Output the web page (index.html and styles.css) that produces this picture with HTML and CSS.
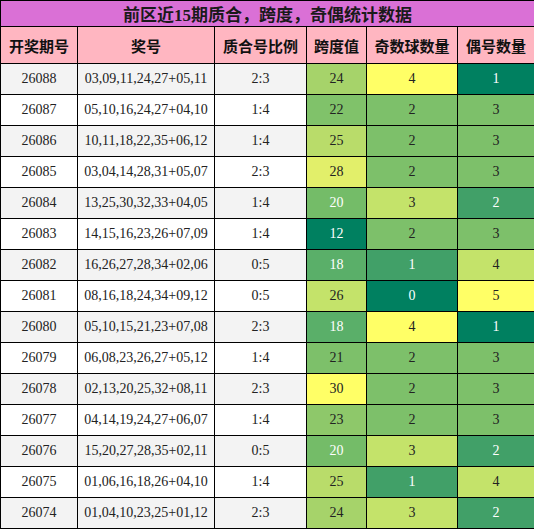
FILE: index.html
```html
<!DOCTYPE html>
<html lang="zh">
<head>
<meta charset="utf-8">
<title>前区近15期质合，跨度，奇偶统计数据</title>
<link rel="stylesheet" href="styles.css">
</head>
<body>
<table class="stats">
  <colgroup>
    <col class="w-issue"><col class="w-nums"><col class="w-ratio"><col class="w-span"><col class="w-odd"><col class="w-even">
  </colgroup>
  <thead>
    <tr class="title-row"><th colspan="6">前区近15期质合，跨度，奇偶统计数据</th></tr>
    <tr class="head-row"><th>开奖期号</th><th>奖号</th><th>质合号比例</th><th>跨度值</th><th>奇数球数量</th><th>偶号数量</th></tr>
  </thead>
  <tbody>
    <tr class="alt"><td>26088</td><td>03,09,11,24,27+05,11</td><td>2:3</td><td class="s24">24</td><td class="k4">4</td><td class="k0">1</td></tr>
    <tr><td>26087</td><td>05,10,16,24,27+04,10</td><td>1:4</td><td class="s22">22</td><td class="k2">2</td><td class="k2">3</td></tr>
    <tr class="alt"><td>26086</td><td>10,11,18,22,35+06,12</td><td>1:4</td><td class="s25">25</td><td class="k2">2</td><td class="k2">3</td></tr>
    <tr><td>26085</td><td>03,04,14,28,31+05,07</td><td>2:3</td><td class="s28">28</td><td class="k2">2</td><td class="k2">3</td></tr>
    <tr class="alt"><td>26084</td><td>13,25,30,32,33+04,05</td><td>1:4</td><td class="s20">20</td><td class="k3">3</td><td class="k1">2</td></tr>
    <tr><td>26083</td><td>14,15,16,23,26+07,09</td><td>1:4</td><td class="s12">12</td><td class="k2">2</td><td class="k2">3</td></tr>
    <tr class="alt"><td>26082</td><td>16,26,27,28,34+02,06</td><td>0:5</td><td class="s18">18</td><td class="k1">1</td><td class="k3">4</td></tr>
    <tr><td>26081</td><td>08,16,18,24,34+09,12</td><td>0:5</td><td class="s26">26</td><td class="k0">0</td><td class="k4">5</td></tr>
    <tr class="alt"><td>26080</td><td>05,10,15,21,23+07,08</td><td>2:3</td><td class="s18">18</td><td class="k4">4</td><td class="k0">1</td></tr>
    <tr><td>26079</td><td>06,08,23,26,27+05,12</td><td>1:4</td><td class="s21">21</td><td class="k2">2</td><td class="k2">3</td></tr>
    <tr class="alt"><td>26078</td><td>02,13,20,25,32+08,11</td><td>2:3</td><td class="s30">30</td><td class="k2">2</td><td class="k2">3</td></tr>
    <tr><td>26077</td><td>04,14,19,24,27+06,07</td><td>1:4</td><td class="s23">23</td><td class="k2">2</td><td class="k2">3</td></tr>
    <tr class="alt"><td>26076</td><td>15,20,27,28,35+02,11</td><td>0:5</td><td class="s20">20</td><td class="k3">3</td><td class="k1">2</td></tr>
    <tr><td>26075</td><td>01,06,16,18,26+04,10</td><td>1:4</td><td class="s25">25</td><td class="k1">1</td><td class="k3">4</td></tr>
    <tr class="alt"><td>26074</td><td>01,04,10,23,25+01,12</td><td>2:3</td><td class="s24">24</td><td class="k3">3</td><td class="k1">2</td></tr>
  </tbody>
</table>
</body>
</html>
```
FILE: styles.css
```css
html, body {
  margin: 0;
  padding: 0;
  background: #ffffff;
}

.stats {
  width: 534px;
  border-collapse: collapse;
  table-layout: fixed;
  font-family: "Liberation Serif", "Noto Sans CJK SC", serif;
  color: #222222;
}

.w-issue { width: 77px; }
.w-nums { width: 137px; }
.w-ratio { width: 92px; }
.w-span { width: 60px; }
.w-odd { width: 91px; }
.w-even { width: 77px; }

.stats th,
.stats td {
  border: 1px solid #000000;
  padding: 0;
  text-align: center;
  white-space: nowrap;
  overflow: hidden;
}

.title-row th {
  height: 25px;
  background: #da70d6;
  font-family: "Liberation Serif", "Noto Sans CJK SC", serif;
  font-size: 17px;
  font-weight: bold;
  color: #1a1a1a;
}

.head-row th {
  height: 36px;
  background: #ffb6c1;
  font-family: "Noto Sans CJK SC", sans-serif;
  font-size: 15px;
  font-weight: bold;
  color: #111111;
}

.stats td {
  height: 30px;
  font-size: 14px;
  background: #ffffff;
}

.stats .alt td {
  background: #f3f3f3;
}

/* 跨度值 colour scale */
.stats td.s12 { background: #008060; color: #ffffff; }
.stats td.s18 { background: #5aaf69; color: #ffffff; }
.stats td.s20 { background: #74bc68; color: #ffffff; }
.stats td.s21 { background: #7dc06a; }
.stats td.s22 { background: #80c26a; }
.stats td.s23 { background: #8ec86a; }
.stats td.s24 { background: #a6d36a; }
.stats td.s25 { background: #b9dc6a; }
.stats td.s26 { background: #c4e36a; }
.stats td.s28 { background: #e2ef6a; }
.stats td.s30 { background: #ffff66; }

/* 奇数 / 偶号 five-step scale */
.stats td.k0 { background: #008060; color: #ffffff; }
.stats td.k1 { background: #41a068; color: #ffffff; }
.stats td.k2 { background: #7dc06a; }
.stats td.k3 { background: #c4e36a; }
.stats td.k4 { background: #ffff66; }
```
